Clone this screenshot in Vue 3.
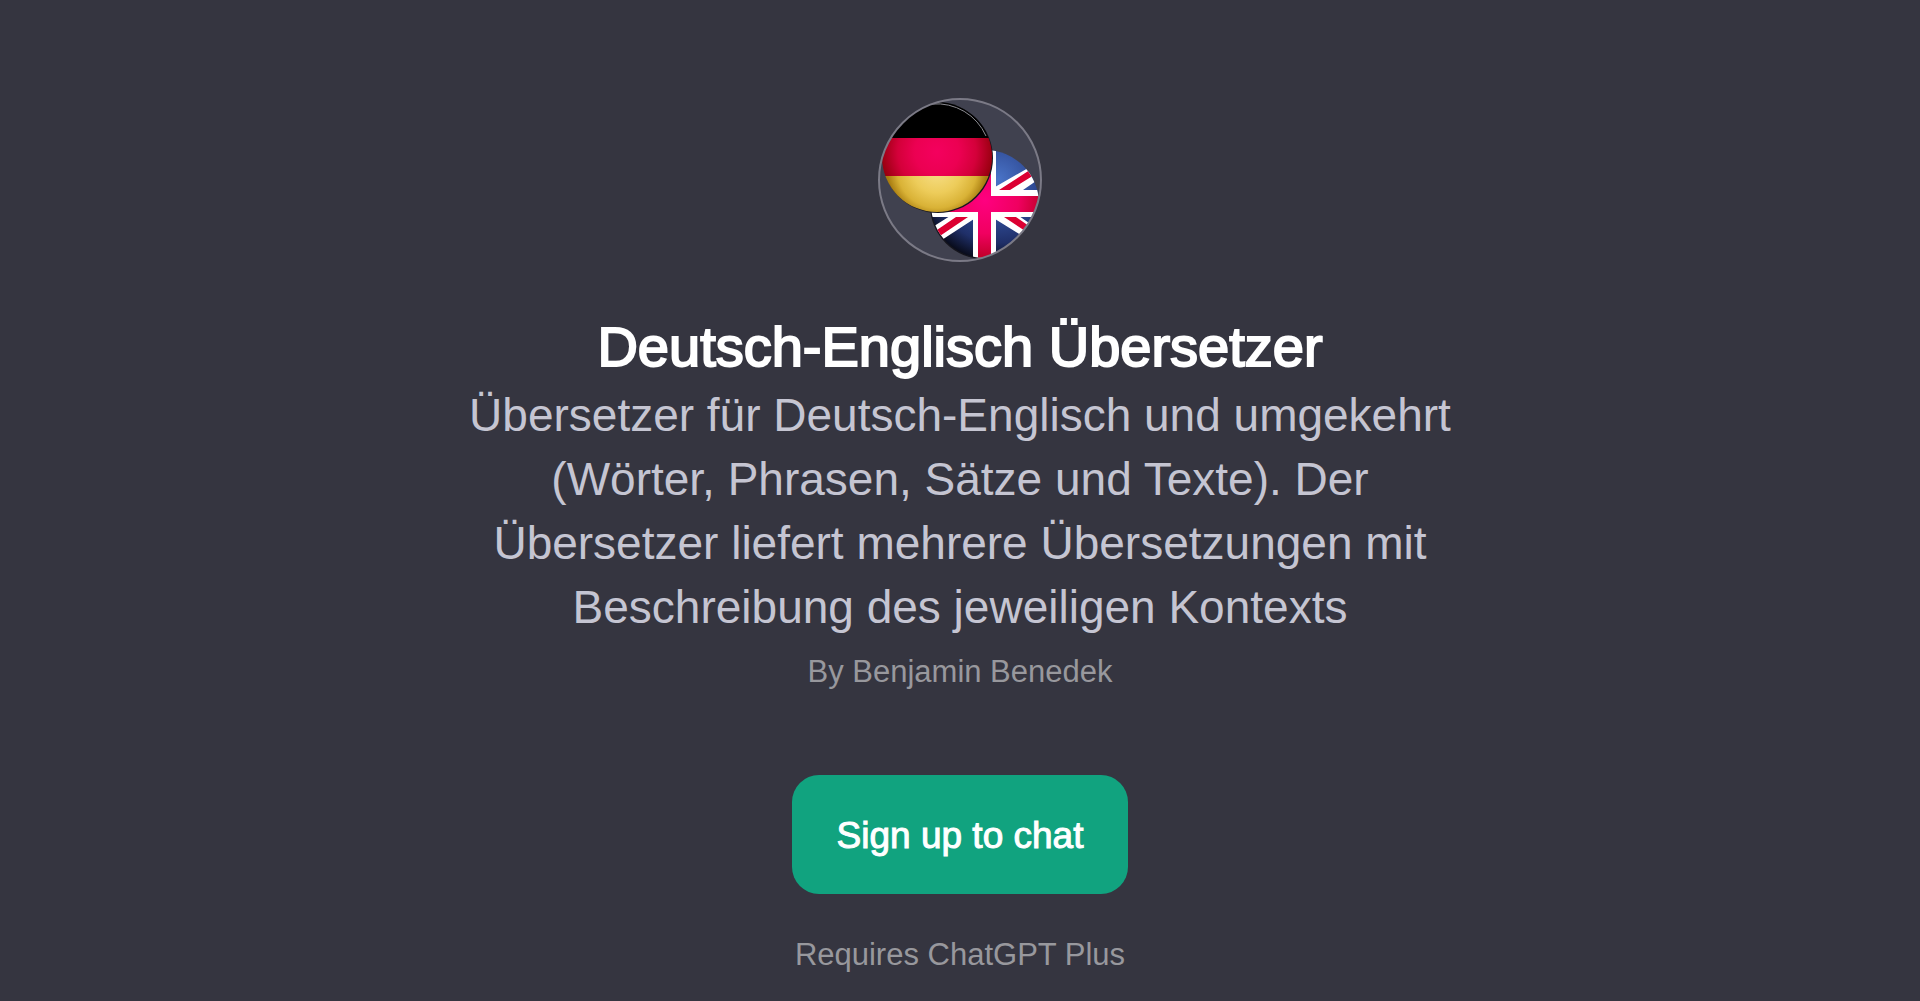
<script setup>
const name = 'Deutsch-Englisch Übersetzer'
const author = 'Benjamin Benedek'
</script>

<template>
  <main class="page">
    <svg class="avatar" viewBox="10 10 164 164" role="img" aria-label="Deutsche und britische Flagge">
      <defs>
        <clipPath id="frame"><circle cx="92" cy="92" r="81" /></clipPath>
        <clipPath id="de"><circle cx="69" cy="69" r="55" /></clipPath>
        <clipPath id="uk"><circle cx="117" cy="116" r="54" /></clipPath>
        <radialGradient id="red" gradientUnits="userSpaceOnUse" cx="69" cy="64" r="56">
          <stop offset="0" stop-color="#f4005e" />
          <stop offset="0.4" stop-color="#ec0052" />
          <stop offset="0.7" stop-color="#d4003a" />
          <stop offset="1" stop-color="#98000f" />
        </radialGradient>
        <radialGradient id="gold" gradientUnits="userSpaceOnUse" cx="69" cy="80" r="50">
          <stop offset="0" stop-color="#f8e08c" />
          <stop offset="0.5" stop-color="#edcc5a" />
          <stop offset="0.8" stop-color="#d9b236" />
          <stop offset="1" stop-color="#a87c10" />
        </radialGradient>
        <radialGradient id="blue" gradientUnits="userSpaceOnUse" cx="130" cy="92" r="84">
          <stop offset="0" stop-color="#4a74c8" />
          <stop offset="0.45" stop-color="#2f4a94" />
          <stop offset="0.75" stop-color="#1f2f68" />
          <stop offset="1" stop-color="#05060f" />
        </radialGradient>
        <radialGradient id="cross" gradientUnits="userSpaceOnUse" cx="117" cy="112" r="56">
          <stop offset="0" stop-color="#ff0080" />
          <stop offset="0.6" stop-color="#f00060" />
          <stop offset="1" stop-color="#c4002c" />
        </radialGradient>
      </defs>
      <circle cx="92" cy="92" r="81" fill="#40414f" />
      <g clip-path="url(#frame)">
        <circle cx="116" cy="117" r="54" fill="#15151d" />
        <g clip-path="url(#uk)">
          <rect x="60" y="60" width="114" height="114" fill="url(#blue)" />
          <path fill="#fff" d="M127 99 174 72V89L155 102V104H127ZM106 128H82L60 142V161L106 131ZM127 128H151L174 144V160L127 131Z" />
          <path fill="#dc0032" d="M131 102 174 74V82L142 102ZM88 129H100L60 156V148ZM136 129H148L174 147V154Z" />
          <path fill="#fff" d="M105 60H128V102H174V129H128V174H105V129H60V102H105Z" />
          <path fill="url(#cross)" d="M110 60H123V108H174V124H123V174H110V124H60V108H110Z" />
        </g>
        <circle cx="70" cy="70" r="55" fill="#17171f" />
        <g clip-path="url(#de)">
          <rect x="10" y="10" width="120" height="40" />
          <rect x="10" y="50" width="120" height="38" fill="url(#red)" />
          <rect x="10" y="88" width="120" height="40" fill="url(#gold)" />
        </g>
        <path d="M64 16A54 54 0 0 1 118 48" fill="none" stroke="#8c8c92" />
      </g>
      <circle cx="92" cy="92" r="81" fill="none" stroke="#7b7a86" stroke-width="2" />
    </svg>
    <h1>{{ name }}</h1>
    <p class="description">
      Übersetzer für Deutsch-Englisch und umgekehrt (Wörter, Phrasen, Sätze und Texte). Der Übersetzer liefert mehrere
      Übersetzungen mit Beschreibung des jeweiligen Kontexts
    </p>
    <p class="note">By {{ author }}</p>
    <button type="button">Sign up to chat</button>
    <p class="note">Requires ChatGPT Plus</p>
  </main>
</template>

<style>
body {
  margin: 0;
  background: #353540;
}
</style>

<style scoped>
.page {
  display: flex;
  flex-direction: column;
  align-items: center;
  box-sizing: border-box;
  min-height: 100vh;
  padding: 98px 24px 16px;
  font-family: "Liberation Sans", Arial, sans-serif;
  text-align: center;
}
.avatar {
  width: 164px;
  height: 164px;
}
h1 {
  margin: 53px 0 0;
  font-size: 56px;
  font-weight: 400;
  line-height: 64px;
  color: #fff;
  -webkit-text-stroke: 2px #fff;
}
.description {
  max-width: 1024px;
  margin: 4px 0 8px;
  font-size: 46px;
  line-height: 64px;
  color: #c5c5d2;
}
.note {
  margin: 0;
  font-size: 31px;
  line-height: 50px;
  color: #98989d;
}
button {
  margin: 78px 0 36px;
  padding: 37px 45px 34px;
  border: 0;
  border-radius: 27px;
  background: #11a37f;
  color: #fff;
  font-family: inherit;
  font-size: 37px;
  line-height: 48px;
  -webkit-text-stroke: 1px #fff;
  cursor: pointer;
}
</style>
